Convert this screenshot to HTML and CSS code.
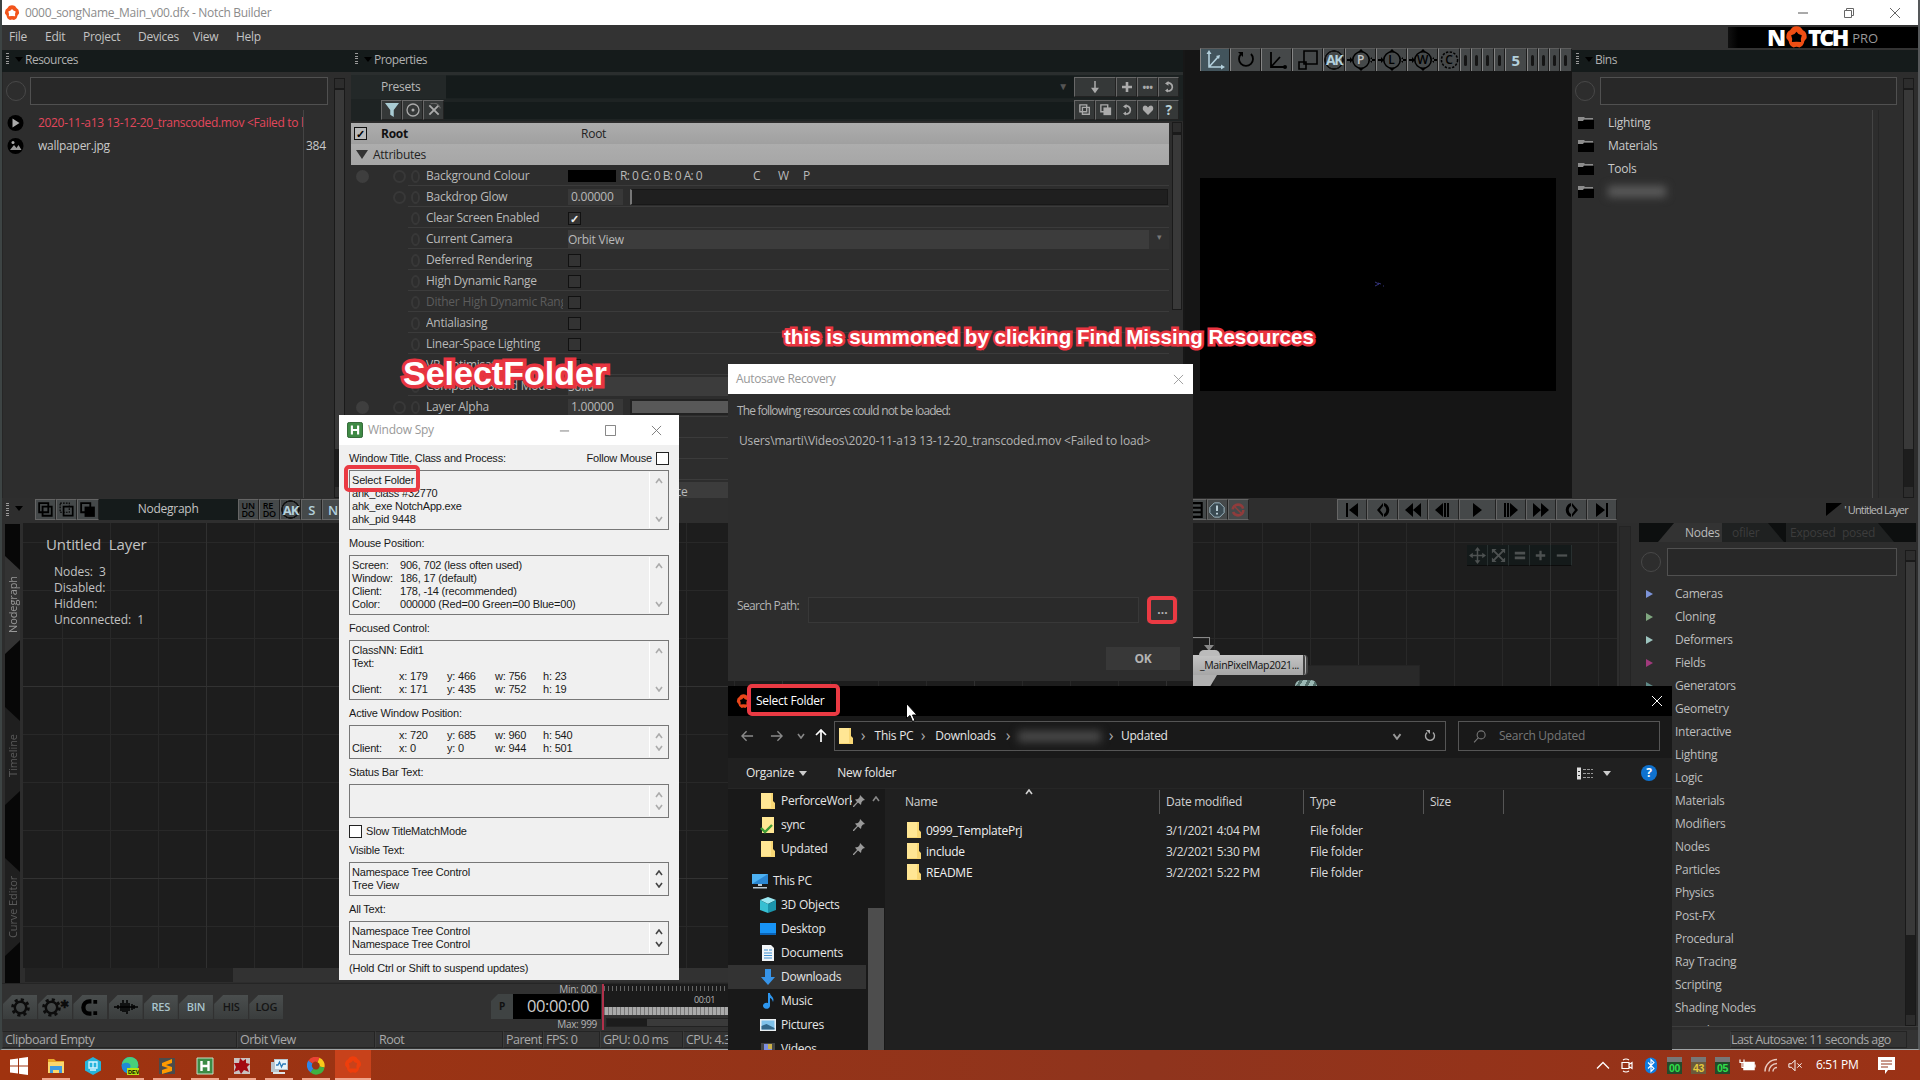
FILE: index.html
```html
<!DOCTYPE html>
<html lang="en">
<head>
<meta charset="utf-8">
<title>0000_songName_Main_v00.dfx - Notch Builder</title>
<link rel="stylesheet" href="styles.css">
</head>
<body>
<svg class="defs" aria-hidden="true">
  <symbol id="close" viewBox="0 0 12 12"><path d="M1 1l10 10M11 1L1 11" fill="none" stroke="currentColor"/></symbol>
  <symbol id="flower" viewBox="0 0 16 16"><path fill="currentColor" fill-rule="evenodd" d="M5 1q3-1.500 6 0l1.500 2q3 1.500 2.500 5.500l-1.500 2q-.5 3.500-3.500 4.500-2-1-4 0-3-1-3.500-4.500L1 8.500Q.5 4.500 3.500 3zM8 4L6.600 5.600 4.300 6.500 5 9l-.2 2.200L8 11l3.200.2L11 9l.7-2.500-2.300-.9z"/></symbol>
  <symbol id="folder" viewBox="0 0 14 17"><path fill="#f8d775" d="M0 0h12v8l2 2v6H0z"/><path fill="#ffe694" d="M0 0h10v15H0z"/></symbol>
  <symbol id="pin" viewBox="0 0 12 12"><path fill="#9a9a9a" d="M7 0l5 5-2 .6-1.500 1.700L8 10 5 7.500 1 12 0 12 0 11 4 7 2 4.500l3-.6L6.700 2z"/></symbol>
  <symbol id="bin" viewBox="0 0 16 12"><path fill="#000" d="M0 3h16v9H0z"/><path fill="#8c8c8c" d="M0 0h6l1 1h8v1.500H6L5 4H0z"/></symbol>
  <symbol id="up" viewBox="0 0 8 6"><path d="M1 5l3-4 3 4" fill="none" stroke="currentColor" stroke-width="1.600"/></symbol>
  <symbol id="down" viewBox="0 0 8 6"><path d="M1 1l3 4 3-4" fill="none" stroke="currentColor" stroke-width="1.600"/></symbol>
  <symbol id="gear" viewBox="0 0 20 20"><circle cx="10" cy="10" r="6" fill="none" stroke="currentColor" stroke-width="2.600"/><circle cx="10" cy="10" r="8.300" fill="none" stroke="currentColor" stroke-width="3" stroke-dasharray="3.260 3.260"/></symbol>
  <symbol id="diamond" viewBox="0 0 28 22"><path fill="#000" d="M0 10h28v2H0zM14 0l3 3h-6zM14 22l3-3h-6zM3 8l3 3-3 3zM25 8l-3 3 3 3z"/><circle cx="14" cy="11" r="8.200" fill="#45494a" stroke="#000" stroke-width="1.600"/></symbol>
  <symbol id="reset" viewBox="0 0 12 12"><path d="M4 2.200A4 4 0 113.500 9.500" fill="none" stroke="currentColor" stroke-width="1.700"/><path d="M5.500 0v4.800L2 2.500zM5 7.500v4L2 9.500z" fill="currentColor"/></symbol>
  <symbol id="copy" viewBox="0 0 14 14"><path d="M1 1h8v8H1zM4 4h8v8H4z" fill="none" stroke="currentColor" stroke-width="1.600"/></symbol>
  <symbol id="copyfill" viewBox="0 0 14 14"><path d="M1 1h8v8H1z" fill="none" stroke="currentColor" stroke-width="1.600"/><path d="M4 4h9v9H4z" fill="currentColor"/></symbol>
</svg>

<div class="desktop">
<main class="notch">
  <header class="titlebar">
    <svg class="app-icon"><use href="#flower"/></svg>
    <span class="app-title">0000_songName_Main_v00.dfx - Notch Builder</span>
    <div class="win-controls">
      <svg viewBox="0 0 12 12"><path d="M1 6h10" stroke="#555"/></svg>
      <svg viewBox="0 0 12 12"><path d="M1.500 3.500h7v7h-7zM3.500 3V1.500h7v7H9" fill="none" stroke="#666"/></svg>
      <svg><use href="#close"/></svg>
    </div>
  </header>
  <nav class="menubar">
    <span class="m1">File</span><span class="m2">Edit</span><span class="m3">Project</span><span class="m4">Devices</span><span class="m5">View</span><span class="m6">Help</span>
    <div class="brand"><b>N</b><svg><use href="#flower"/></svg><b>TCH</b><i>PRO</i></div>
  </nav>

  <section class="upper">
    <aside class="resources">
      <h2 class="panel-head"><i class="grip"></i><i class="tri"></i><span>Resources</span></h2>
      <div class="list-body">
        <div class="list-main">
          <div class="search"><i class="ring"></i><i class="field"></i></div>
          <div class="res-row bad"><svg viewBox="0 0 16 16"><circle cx="8" cy="8" r="8"/><path d="M5 3.500l7 4.500-7 4.500z" fill="#aaa"/></svg><span>2020-11-a13 13-12-20_transcoded.mov &lt;Failed to load&gt;</span></div>
          <div class="res-row"><svg viewBox="0 0 16 16"><circle cx="8" cy="8" r="8"/><path d="M2.500 12l4-5 2.500 3 2-3 3 5z" fill="#999"/><circle cx="5.500" cy="4.500" r="1.500" fill="#aaa"/></svg><span>wallpaper.jpg</span><em>384</em></div>
          <i class="col-line"></i>
        </div>
        <i class="vscroll"></i>
      </div>
    </aside>

    <section class="props">
      <h2 class="panel-head"><i class="grip"></i><i class="tri"></i><span>Properties</span></h2>
      <div class="presets"><span>Presets</span><i class="combo">▼</i>
        <div class="tbtns"><b class="wide"><svg viewBox="0 0 12 12"><path d="M6 0v9M3.500 7.500L6 11l2.500-3.500z" stroke="currentColor" stroke-width="1.500" fill="currentColor"/></svg></b><b><svg viewBox="0 0 12 12"><path d="M6 1v10M1 6h10" stroke="currentColor" stroke-width="2.600"/></svg></b><b>•••</b><b><svg><use href="#reset"/></svg></b></div>
      </div>
      <div class="filters">
        <div class="tbtns left"><b><svg viewBox="0 0 12 12"><path d="M0 0h12L7.500 6v6l-3-2V6z" fill="#a9cbd3"/></svg></b><b><svg viewBox="0 0 14 14"><circle cx="7" cy="7" r="6" fill="none" stroke="currentColor" stroke-width="1.300"/><circle cx="7" cy="7" r="1.500" fill="currentColor"/></svg></b><b><svg viewBox="0 0 12 12"><path d="M2 2l8 8M10 2l-8 8" stroke="currentColor" stroke-width="1.600"/><path d="M3 .7a6 6 0 018.500 4" fill="none" stroke="#666"/></svg></b></div>
        <i class="filter-field"></i>
        <div class="tbtns"><b><svg><use href="#copy"/></svg></b><b><svg><use href="#copyfill"/></svg></b><b><svg><use href="#reset"/></svg></b><b><svg viewBox="0 0 12 12"><path d="M6 11L1 6Q0 2 3 1.500 5 1.500 6 3.500 7 1.500 9 1.500 12 2 11 6z" fill="currentColor"/></svg></b><b class="q">?</b></div>
      </div>
      <div class="prop-body">
        <div class="prop-list">
          <div class="root"><i class="check dark">✓</i><b>Root</b><span>Root</span></div>
          <div class="attrs"><i class="tri big"></i><span>Attributes</span></div>
          <div class="p key dot"><label>Background Colour</label><i class="swatch"></i><span class="rgba">R: 0 G: 0 B: 0 A: 0</span><span class="cwp"><i>C</i><i>W</i><i>P</i></span></div>
          <div class="p dot"><label>Backdrop Glow</label><span class="num">0.00000</span><i class="slider"></i></div>
          <div class="p"><label>Clear Screen Enabled</label><i class="check">✓</i></div>
          <div class="p sel"><label>Current Camera</label><span class="drop">Orbit View</span><i class="arrow">▾</i></div>
          <div class="p"><label>Deferred Rendering</label><i class="check"></i></div>
          <div class="p"><label>High Dynamic Range</label><i class="check"></i></div>
          <div class="p off"><label>Dither High Dynamic Range</label><i class="check"></i></div>
          <div class="p"><label>Antialiasing</label><i class="check"></i></div>
          <div class="p"><label>Linear-Space Lighting</label><i class="check"></i></div>
          <div class="p"><label>VR Optimisation</label><i class="check"></i></div>
          <div class="p sel"><label>Composite Blend Mode</label><span class="drop">Solid</span></div>
          <div class="p key dot"><label>Layer Alpha</label><span class="num">1.00000</span><i class="slider full"></i></div>
          <div class="p"></div>
          <div class="p"></div>
          <div class="p"></div>
          <div class="p sel"><label></label><span class="drop late">Workspace</span></div>
        </div>
        <i class="vscroll short"></i>
      </div>
    </section>

    <section class="viewport">
      <div class="vtools">
        <b class="w30 lit"><svg viewBox="0 0 20 20"><path d="M4 2v15h14M4 17L13 7" fill="none" stroke="currentColor" stroke-width="1.600"/><path d="M4 0l2.500 4h-5zM20 17l-4 2.500v-5zM15 5l-1 4-3-3z" fill="currentColor"/></svg></b>
        <b class="w31"><svg viewBox="0 0 20 20"><path d="M5 4a7 7 0 1010 0" fill="none" stroke="#000" stroke-width="1.800"/><path d="M2 2h5v5z"/></svg></b>
        <b class="w31"><svg viewBox="0 0 20 20"><path d="M4 2v15h14M4 17L13 7" fill="none" stroke="#000" stroke-width="1.800"/><circle cx="18" cy="17" r="2"/></svg></b>
        <b class="w31"><svg viewBox="0 0 20 20"><path d="M6 1h13v13H6zM1 12h7v7H1z" fill="none" stroke="#000" stroke-width="1.600"/></svg></b>
        <b class="w22 ak">AK</b>
        <b class="w31 dia"><svg><use href="#diamond"/></svg><i class="pale">P</i></b>
        <b class="w31 dia"><svg><use href="#diamond"/></svg><i>L</i></b>
        <b class="w31 dia"><svg><use href="#diamond"/></svg><i>W</i></b>
        <b class="w22 dia ring-c"><svg viewBox="0 0 20 20"><circle cx="10" cy="10" r="8.500" fill="none" stroke="#000" stroke-width="1.600" stroke-dasharray="2.500 1.500"/></svg><i>C</i></b>
        <b class="w11"></b><b class="w11"></b><b class="w11"></b><b class="w11"></b><b class="w22 five">5</b><b class="w11"></b><b class="w11"></b><b class="w11"></b><b class="w11"></b>
      </div>
      <div class="screen"><svg viewBox="0 0 12 6"><path d="M1 1l4 2-4 2M4 2l3 1M9 5h1" fill="none" stroke="#34347c"/></svg></div>
    </section>

    <aside class="bins">
      <h2 class="panel-head"><i class="grip"></i><i class="tri"></i><span>Bins</span></h2>
      <div class="list-body">
        <div class="list-main">
          <div class="search"><i class="ring"></i><i class="field"></i></div>
          <div class="bin-row"><svg><use href="#bin"/></svg><span>Lighting</span></div>
          <div class="bin-row"><svg><use href="#bin"/></svg><span>Materials</span></div>
          <div class="bin-row"><svg><use href="#bin"/></svg><span>Tools</span></div>
          <div class="bin-row"><svg><use href="#bin"/></svg><i class="blurred"></i></div>
          <i class="col-line"></i><i class="col-line second"></i>
        </div>
        <i class="vscroll"></i>
      </div>
    </aside>
  </section>

  <div class="midbar">
    <i class="grip"></i><i class="tri"></i>
    <div class="mbtns first"><b><svg><use href="#copy"/></svg></b><b><svg viewBox="0 0 14 14"><path d="M1 1h8v8H1z" fill="none" stroke="#000" stroke-dasharray="1.500 1"/><path d="M4 4h8v8H4z" fill="none" stroke="#000" stroke-width="1.500"/></svg></b><b><svg><use href="#copyfill"/></svg></b></div>
    <span class="graph-name">Nodegraph</span>
    <div class="mbtns second"><b class="two">UN<br>DO</b><b class="two">RE<br>DO</b><b class="akb">AK</b><b class="blue">S</b><b class="blue">N</b></div>
    <div class="mbtns third"><b><svg viewBox="0 0 14 14"><path d="M0 1h12v12H0M0 5h12M3 9h9" fill="none" stroke="#000" stroke-width="1.800"/></svg></b><b class="info"><svg viewBox="0 0 18 18"><path d="M6 1h6l5 5v6l-5 5H6l-5-5V6z" fill="#3a4a52" stroke="#a8c4d0"/><path d="M9 4v6M9 12v2" stroke="#c8dce4" stroke-width="2"/></svg></b><b><svg viewBox="0 0 18 18"><circle cx="9" cy="9" r="6" fill="none" stroke="#8f3c3c" stroke-width="3" stroke-dasharray="16 3"/><path d="M4 4l10 10" stroke="#8f3c3c" stroke-width="1.500"/></svg></b></div>
    <div class="transport">
      <b><svg viewBox="0 0 16 16"><path d="M2 1h2v14H2zM14 1v14L5 8z"/></svg></b>
      <b><svg viewBox="0 0 16 16"><path d="M8 1L2 8l6 7v-3L5 8l3-4zM9 1c7 2 7 12 0 14v-3c3-2 3-6 0-8z"/></svg></b>
      <b><svg viewBox="0 0 16 16"><path d="M8 1v14L0 8zM16 1v14L8 8z"/></svg></b>
      <b><svg viewBox="0 0 16 16"><path d="M8 1v14L0 8zM9 1h2v14H9zM12 1h2v14h-2z"/></svg></b>
      <b class="play"><svg viewBox="0 0 16 16"><path d="M4 1l9 7-9 7z"/></svg></b>
      <b><svg viewBox="0 0 16 16"><path d="M1 1h2v14H1zM4 1h2v14H4zM7 1l8 7-8 7z"/></svg></b>
      <b><svg viewBox="0 0 16 16"><path d="M0 1l8 7-8 7zM8 1l8 7-8 7z"/></svg></b>
      <b><svg viewBox="0 0 16 16"><path d="M8 1l6 7-6 7v-3l3-4-3-4zM7 1C0 3 0 13 7 15v-3C4 10 4 6 7 4z"/></svg></b>
      <b><svg viewBox="0 0 16 16"><path d="M2 1l9 7-9 7zM12 1h2v14h-2z"/></svg></b>
    </div>
    <i class="corner"></i><span class="layer-name">' Untitled Layer</span>
  </div>

  <section class="lower">
    <div class="work">
      <div class="graph-area">
        <div class="side-tabs"><span class="on">Nodegraph</span><span>Timeline</span><span>Curve Editor</span></div>
        <div class="graph-col">
          <div class="canvas">
            <h3>Untitled&nbsp; Layer</h3>
            <p>Nodes:&nbsp; 3</p><p>Disabled:</p><p>Hidden:</p><p>Unconnected:&nbsp; 1</p>
            <div class="zoom-tools"><b><svg viewBox="0 0 18 18"><path d="M9 2v14M2 9h14" stroke="currentColor" stroke-width="1.600"/><path d="M9 0l3 4H6zM9 18l3-4H6zM0 9l4-3v6zM18 9l-4-3v6z" fill="currentColor"/></svg></b><b><svg viewBox="0 0 18 18"><path d="M3 3l12 12M15 3L3 15" stroke="currentColor" stroke-width="2"/><path d="M2 2h5L2 7zM16 2v5l-5-5zM2 16v-5l5 5zM16 16h-5l5-5z" fill="currentColor"/></svg></b><b><svg viewBox="0 0 18 18"><path d="M4 6.500h11M4 11.500h11" stroke="currentColor" stroke-width="3"/></svg></b><b><svg viewBox="0 0 18 18"><path d="M9 4v10M4 9h10" stroke="currentColor" stroke-width="2.400"/></svg></b><b><svg viewBox="0 0 18 18"><path d="M4 9h11" stroke="currentColor" stroke-width="2.400"/></svg></b></div>
            <div class="wire"></div>
            <div class="node-shade"></div>
            <i class="stem"></i>
            <div class="node"><i class="cap"></i>_MainPixelMap2021...</div>
            <i class="port"></i>
          </div>
          <div class="hscroll"></div>
        </div>
        <i class="vscroll graph-scroll"></i>
      </div>
      <div class="bottom-tools">
        <div class="chips">
          <b><svg><use href="#gear"/></svg></b>
          <b><svg><use href="#gear"/></svg><small>✱</small></b>
          <b><svg viewBox="0 0 20 20"><path d="M11 3.500H9a6.500 6.500 0 000 13h2" fill="none" stroke="#000" stroke-width="4.500"/><path d="M13 2h4v4h-4zM13 14h4v4h-4z"/></svg></b>
          <b><svg class="wave" viewBox="0 0 24 16"><path d="M0 8h24M4 6v4M7 4v8M9 1v12M11 4v9M13 1v14M15 4v8M18 5v6M20 6v4" stroke="#000" stroke-width="1.500"/></svg></b>
          <b class="tx">RES</b><b class="tx">BIN</b><b class="tx k">HIS</b><b class="tx k">LOG</b>
        </div>
        <div class="clock"><small>Min: 000</small><div class="clock-row"><b>P</b><span>00:00:00</span></div><small>Max: 999</small></div>
        <div class="timeline"><div class="ruler"><span>00:01</span></div><div class="bar"></div><div class="tscroll"></div></div>
      </div>
    </div>
    <aside class="nodes">
      <div class="node-tabs"><span class="act">Nodes</span><span class="t2">ofiler</span><span class="t3">Exposed</span><span class="t4">posed</span></div>
      <div class="list-body">
        <div class="list-main">
          <div class="search"><i class="ring"></i><i class="field"></i></div>
          <div class="n c1">Cameras</div><div class="n c2">Cloning</div><div class="n c3">Deformers</div><div class="n c4">Fields</div><div class="n c5">Generators</div><div class="n">Geometry</div><div class="n">Interactive</div><div class="n">Lighting</div><div class="n">Logic</div><div class="n">Materials</div><div class="n">Modifiers</div><div class="n">Nodes</div><div class="n">Particles</div><div class="n">Physics</div><div class="n">Post-FX</div><div class="n">Procedural</div><div class="n">Ray Tracing</div><div class="n">Scripting</div><div class="n">Shading Nodes</div><div class="n">Sound</div>
        </div>
        <i class="vscroll"></i>
      </div>
    </aside>
  </section>

  <footer class="status"><span class="s1">Clipboard Empty</span><span class="s2">Orbit View</span><span class="s3">Root</span><span class="s4">Parent</span><span class="s5">FPS: 0</span><span class="s6">GPU: 0.0 ms</span><span class="s7">CPU: 4.3 ms</span><span class="s8">Last Autosave: 11 seconds ago</span></footer>
</main>

<footer class="taskbar">
  <div class="apps">
    <b><svg viewBox="0 0 18 18"><path fill="#fff" d="M0 2.500L8 1.400V8.500H0zM9 1.200L18 0v8.500H9zM0 9.500h8v7.100L0 15.500zM9 9.500h9V18l-9-1.200z"/></svg></b>
    <b class="run"><svg viewBox="0 0 18 18"><path fill="#e9a92c" d="M1 2h6l2 2h8v3H1z"/><path fill="#fbd66d" d="M1 5h16v11H1z"/><path fill="#3f9ae0" d="M3 9h12v7h-3v-3H6v3H3z"/></svg></b>
    <b><svg viewBox="0 0 18 18"><path fill="#25b4dc" d="M9 0l8 4.500v9L9 18l-8-4.500v-9z"/><path fill="none" stroke="#d6f4ff" stroke-width="1.300" d="M5 5h8v6H5zM9 5v6M6 13h6"/></svg></b>
    <b class="run"><svg viewBox="0 0 18 18"><circle cx="9" cy="8.500" r="8.500" fill="#1f8bd6"/><path fill="#48cf7b" d="M9 0c7 0 10 7 7 11H9c2-4-2-7-8-4 1-4 4-7 8-7z"/><path fill="#b6e312" d="M6 11h12v7H6z"/><text x="7" y="16.800" font-size="5.500" font-weight="700" letter-spacing="0" font-family="Liberation Sans, sans-serif">DEV</text></svg></b>
    <b class="run"><svg viewBox="0 0 18 18"><path fill="#4b4b4b" d="M1 1h16v16H1z"/><path fill="#ff9a00" d="M4 6l10-4v4L8 8l6 2v4L4 17v-4l6-2-6-2z"/></svg></b>
    <b class="run"><svg viewBox="0 0 18 18"><path fill="#3c8c46" stroke="#c6e0c6" d="M1 1h16v16H1z"/><path fill="none" stroke="#fff" stroke-width="2.400" d="M5.500 4v10M12.500 4v10M5.500 9h7"/></svg></b>
    <b class="run"><svg viewBox="0 0 18 18"><path fill="#c9c2c0" d="M1 1h16v16H1z"/><path fill="#a30b12" d="M7 1l3 3 3-2v4l4 1-3 3 2 5-5-2-3 4-2-4-5 2 2-5-2-4 5 0z"/></svg></b>
    <b class="run"><svg viewBox="0 0 18 18"><path fill="#b9c4cc" d="M1 5h8v10H1zM4 2h14v11H4z"/><path fill="#e8f4fb" d="M5 3h12v9H5z"/><path fill="none" stroke="#2b7bb9" stroke-width="1.300" d="M6 8h2l1.500-3 2 5L13 7h3"/><path fill="#dfe5e8" d="M3 15h12v2H3z"/></svg></b>
    <b class="run"><svg viewBox="0 0 18 18"><g fill="none" stroke-width="5"><path stroke="#2f86e8" d="M5 13.500A6 6 0 013.500 5"/><path stroke="#e94234" d="M3.500 5a6 6 0 018-2"/><path stroke="#f9ca1b" d="M11.500 3a6 6 0 013.500 7"/><path stroke="#3fb143" d="M15 10a6 6 0 01-10 3.500"/></g></svg></b>
    <b class="current"><svg><use href="#flower"/></svg></b>
  </div>
  <div class="tray">
    <svg viewBox="0 0 14 14"><path d="M1 10l6-6 6 6" fill="none" stroke="#fff" stroke-width="1.300"/></svg>
    <svg viewBox="0 0 14 14"><path d="M2 4h7v6H2zM9 6l3-2v6L9 8M3 1.500q3-2 6 0M3 12.500q3 2 6 0" fill="none" stroke="#fff" stroke-width="1.200"/></svg>
    <svg viewBox="0 0 14 16"><rect x="1" width="12" height="16" rx="6" fill="#0d7be0"/><path d="M4 5l6 6-3 3V2l3 3-6 6" fill="none" stroke="#fff" stroke-width="1.100"/></svg>
    <span class="meter">00</span><span class="meter amber">43</span><span class="meter">05</span>
    <svg viewBox="0 0 17 12"><path d="M5 3h10v7H5z" fill="#fff" stroke="#fff" stroke-width="1.500"/><path d="M1 0v3h4V0M3 3v5h2M16 5v3" fill="none" stroke="#fff" stroke-width="1.200"/></svg>
    <svg viewBox="0 0 14 14"><path d="M1 13A12 12 0 0113 1M5 13a8 8 0 018-8M9 13a4 4 0 014-4" fill="none" stroke="#e8c8be" stroke-width="1.500"/></svg>
    <svg viewBox="0 0 16 14"><path d="M1 5h3l4-4v12L4 9H1zM10.500 4.500l5 5M15.500 4.500l-5 5" fill="none" stroke="#fff" stroke-width="1.100"/></svg>
    <span class="time">6:51 PM</span>
    <svg class="notes" viewBox="0 0 17 17"><path fill="#fff" d="M0 0h17v13h-7l-3 4v-4H0z"/><path d="M3 4h11M3 7h11M3 10h7" stroke="#93341b"/></svg>
  </div>
</footer>
</div>

<section class="spy">
  <header><svg class="h-icon" viewBox="0 0 18 18"><rect x=".5" y=".5" width="17" height="17" rx="2" fill="#3f8a45" stroke="#245c2a"/><path fill="none" stroke="#fff" stroke-width="2.400" d="M5.500 4v10M12.500 4v10M5.500 9h7"/></svg><span>Window Spy</span>
    <div class="spy-ctl"><svg viewBox="0 0 12 12"><path d="M1 6.500h10" stroke="#777"/></svg><svg viewBox="0 0 12 12"><path d="M.5.500h11v11H.500z" fill="none" stroke="#777"/></svg><svg><use href="#close"/></svg></div></header>
  <div class="spy-body">
    <div class="lab"><span>Window Title, Class and Process:</span><span class="follow">Follow Mouse<i class="cb"></i></span></div>
    <div class="box tall"><div>Select Folder<br>ahk_class #32770<br>ahk_exe NotchApp.exe<br>ahk_pid 9448</div><i class="sp"><svg><use href="#up"/></svg><svg><use href="#down"/></svg></i></div>
    <div class="lab">Mouse Position:</div>
    <div class="box tall"><div class="kv"><span>Screen:</span><span>906, 702 (less often used)</span><span>Window:</span><span>186, 17 (default)</span><span>Client:</span><span>178, -14 (recommended)</span><span>Color:</span><span>000000 (Red=00 Green=00 Blue=00)</span></div><i class="sp"><svg><use href="#up"/></svg><svg><use href="#down"/></svg></i></div>
    <div class="lab">Focused Control:</div>
    <div class="box tall"><div>ClassNN: Edit1<br>Text:<div class="xy"><span></span><span>x: 179</span><span>y: 466</span><span>w: 756</span><span>h: 23</span><span>Client:</span><span>x: 171</span><span>y: 435</span><span>w: 752</span><span>h: 19</span></div></div><i class="sp"><svg><use href="#up"/></svg><svg><use href="#down"/></svg></i></div>
    <div class="lab">Active Window Position:</div>
    <div class="box"><div class="xy"><span></span><span>x: 720</span><span>y: 685</span><span>w: 960</span><span>h: 540</span><span>Client:</span><span>x: 0</span><span>y: 0</span><span>w: 944</span><span>h: 501</span></div><i class="sp"><svg><use href="#up"/></svg><svg><use href="#down"/></svg></i></div>
    <div class="lab">Status Bar Text:</div>
    <div class="box"><div></div><i class="sp"><svg><use href="#up"/></svg><svg><use href="#down"/></svg></i></div>
    <div class="lab slow"><i class="cb"></i>Slow TitleMatchMode</div>
    <div class="lab low">Visible Text:</div>
    <div class="box"><div>Namespace Tree Control<br>Tree View</div><i class="sp live"><svg><use href="#up"/></svg><svg><use href="#down"/></svg></i></div>
    <div class="lab">All Text:</div>
    <div class="box"><div>Namespace Tree Control<br>Namespace Tree Control</div><i class="sp live"><svg><use href="#up"/></svg><svg><use href="#down"/></svg></i></div>
    <div class="lab">(Hold Ctrl or Shift to suspend updates)</div>
  </div>
</section>

<section class="recovery">
  <header><span>Autosave Recovery</span><svg><use href="#close"/></svg></header>
  <div class="rec-body">
    <p>The following resources could not be loaded:</p>
    <p class="path">Users\marti\Videos\2020-11-a13 13-12-20_transcoded.mov &lt;Failed to load&gt;</p>
    <div class="rec-search"><span>Search Path:</span><i></i><b>...</b></div>
    <div class="rec-foot"><b>OK</b></div>
  </div>
</section>

<section class="picker">
  <header><svg class="p-icon"><use href="#flower"/></svg><span>Select Folder</span><svg class="x"><use href="#close"/></svg></header>
  <div class="nav">
    <div class="arrows"><svg viewBox="0 0 14 12"><path d="M13 6H1M6 1L1 6l5 5" fill="none" stroke="#8a8a8a" stroke-width="1.500"/></svg><svg viewBox="0 0 14 12"><path d="M1 6h12M8 1l5 5-5 5" fill="none" stroke="#8a8a8a" stroke-width="1.500"/></svg><svg class="sm"><use href="#down"/></svg><svg class="upar" viewBox="0 0 12 14"><path d="M6 13V1M1 6l5-5 5 5" fill="none" stroke="#fff" stroke-width="1.700"/></svg></div>
    <div class="address"><svg class="f"><use href="#folder"/></svg><i class="b1">›</i><span class="c-pc">This PC</span><i>›</i><span class="c-dl">Downloads</span><i>›</i><span class="c-blur"></span><i>›</i><span class="c-up">Updated</span><div class="addr-end"><svg class="dn"><use href="#down"/></svg><svg class="rf" viewBox="0 0 12 12"><path d="M3 2.500a4.500 4.500 0 106 0" fill="none" stroke="#aaa" stroke-width="1.400"/><path d="M2 0h4v4z" fill="#aaa"/></svg></div></div>
    <div class="find"><svg viewBox="0 0 12 12"><circle cx="7.500" cy="4.500" r="3.700" fill="none" stroke="#777"/><path d="M5 7L1 11.500" stroke="#777"/></svg><span>Search Updated</span></div>
  </div>
  <div class="commands"><span>Organize</span><i class="car"></i><span class="nf">New folder</span><svg class="view" viewBox="0 0 16 12"><path d="M0 0h4v12H0z" fill="#ddd"/><path d="M6 2h10M6 6h10M6 10h10" stroke="#999" stroke-dasharray="3 1"/><path d="M1 4h2M1 8h2" stroke="#333"/></svg><i class="car"></i><b class="help">?</b></div>
  <div class="pick-main">
    <div class="tree">
      <div class="items">
        <div class="it pinr"><svg class="f"><use href="#folder"/></svg><span>PerforceWorkspace</span><svg class="pin"><use href="#pin"/></svg></div>
        <div class="it pinr"><svg class="f" viewBox="0 0 14 17"><path fill="#ffe694" d="M1 0h12v16H1z"/><path d="M0 11l4 4 7-7" stroke="#3f9c35" stroke-width="2.400" fill="none"/></svg><span>sync</span><svg class="pin"><use href="#pin"/></svg></div>
        <div class="it pinr"><svg class="f"><use href="#folder"/></svg><span>Updated</span><svg class="pin"><use href="#pin"/></svg></div>
        <div class="it pc"><svg viewBox="0 0 16 16"><path fill="#4db1f2" d="M0 1h16v10H0z"/><path fill="#2b87d3" d="M16 1v10H0z"/><path fill="#b8c8d2" d="M6 11h4v2H6zM1 14h14v1.500H1z"/></svg><span>This PC</span></div>
        <div class="it"><svg viewBox="0 0 16 16"><path fill="#9be8f2" d="M8 0l8 3-8 4-8-4z"/><path fill="#37bfd2" d="M0 3l8 4v9l-8-3z"/><path fill="#1b94ab" d="M16 3L8 7v9l8-3z"/></svg><span>3D Objects</span></div>
        <div class="it"><svg viewBox="0 0 16 16"><path fill="#1793f5" d="M0 2h16v12H0z"/><path fill="#0a62b5" d="M0 12h16v2H0z"/></svg><span>Desktop</span></div>
        <div class="it"><svg viewBox="0 0 16 16"><path fill="#f2f5f7" d="M2 0h9l3 3v13H2z"/><path d="M4 5h4M9 5h3M4 8h8M4 10.500h8M4 13h8" stroke="#3f8fd0"/></svg><span>Documents</span></div>
        <div class="it chosen"><svg viewBox="0 0 16 16"><path fill="#3794e8" d="M5 0h6v8h4l-7 8-7-8h4z"/></svg><span>Downloads</span></div>
        <div class="it"><svg viewBox="0 0 16 16"><path d="M8 0h2c0 3 5 4 3 9-1-3-2-4-3-4v8a3.500 3 0 11-2-3z" fill="#2d96ee"/></svg><span>Music</span></div>
        <div class="it"><svg viewBox="0 0 16 16"><path fill="#e9eef1" d="M0 2h16v12H0z"/><path fill="#7fc2ea" d="M1.500 3.500h13v9h-13z"/><path fill="#33688a" d="M1.500 12.500V9l5-2 8 4v1.500z"/></svg><span>Pictures</span></div>
        <div class="it"><svg viewBox="0 0 16 16"><path fill="#444" d="M1 2h14v12H1z"/><path fill="#7d8ee0" d="M4 3h8v10H4z"/><path fill="#c9b04a" d="M8 3h4v5H8z"/></svg><span>Videos</span></div>
      </div>
      <div class="tree-scroll"><svg><use href="#up"/></svg><i></i></div>
    </div>
    <div class="files">
      <div class="frow fhead"><span>Name<svg><use href="#up"/></svg></span><span>Date modified</span><span>Type</span><span>Size</span></div>
      <div class="frow"><span><svg class="f"><use href="#folder"/></svg>0999_TemplatePrj</span><span>3/1/2021 4:04 PM</span><span>File folder</span></div>
      <div class="frow"><span><svg class="f"><use href="#folder"/></svg>include</span><span>3/2/2021 5:30 PM</span><span>File folder</span></div>
      <div class="frow"><span><svg class="f"><use href="#folder"/></svg>README</span><span>3/2/2021 5:22 PM</span><span>File folder</span></div>
    </div>
  </div>
</section>

<div class="note n-select">SelectFolder</div>
<div class="note n-summon">this is summoned by clicking Find Missing Resources</div>
<i class="mark k-spy"></i><i class="mark k-dots"></i><i class="mark k-title"></i>
<svg class="cursor" viewBox="0 0 12 19"><path d="M.5.500v15l3.500-3 2.500 6 2.500-1-2.500-5.500H11z" fill="#fff" stroke="#000"/></svg>
</body>
</html>
```
FILE: styles.css
```css
* { box-sizing: border-box; }
html, body { margin: 0; height: 100%; overflow: hidden; background: #2d2d2d; }
body { font: 12px/16px "Open Sans", "Noto Sans", sans-serif; color: #b4b4b4; letter-spacing: -.25px; white-space: nowrap; }
i, em { font-style: normal; }
svg { display: block; flex: none; }
.defs { position: absolute; width: 0; height: 0; }

.desktop { width: 1920px; height: 1080px; display: flex; flex-direction: column; }
.notch { height: 1050px; display: flex; flex-direction: column; background: #2d2d2d; border-left: 2px solid #3d4444; border-right: 2px solid #55585a; border-bottom: 1px solid #9fa4a6; }

/* title and menu */
.titlebar { height: 25px; flex: none; background: #fff; display: flex; align-items: center; padding-left: 2px; color: #8b8b8b; }
.app-icon { width: 16px; height: 16px; color: #f2541b; margin-right: 5px; }
.app-title { font-size: 12px; letter-spacing: -.3px; }
.win-controls { margin-left: auto; display: flex; gap: 34px; padding-right: 17px; color: #666; }
.win-controls svg { width: 12px; height: 12px; }
.menubar { height: 25px; flex: none; background: #333; display: flex; align-items: center; padding-left: 7px; color: #c3c3c3; }
.menubar > span { margin-top: -2px; }
.m1 { width: 36px; } .m2 { width: 38px; } .m3 { width: 55px; } .m4 { width: 55px; } .m5 { width: 43px; }
.brand { margin-left: auto; width: 190px; height: 21px; background: linear-gradient(90deg, #111, #000 10px); display: flex; align-items: center; padding-left: 39px; color: #fff; }
.brand b { font: 800 23px/21px "Open Sans", sans-serif; letter-spacing: -2.300px; }
.brand svg { width: 23px; height: 23px; color: #f04e14; margin: 0 0 0 1px; }
.brand i { font-size: 13px; color: #999; margin-left: 5px; letter-spacing: 0; }

/* shared panel parts */
.panel-head { margin: 0; height: 22px; flex: none; background: #151b1b; display: flex; align-items: center; font: inherit; letter-spacing: -.5px; color: #b0b0b0; padding: 0 0 3px 4px; }
.grip { width: 3px; height: 13px; flex: none; background: repeating-linear-gradient(#999 0 1px, transparent 1px 2.500px); }
.tri { width: 0; height: 0; flex: none; border: 4px solid transparent; border-top: 5px solid #000; border-bottom: 0; margin: 0 2px 0 6px; }
.list-body { flex: 1; min-height: 0; display: flex; overflow: hidden; }
.list-main { flex: 1; position: relative; overflow: hidden; }
.search { display: flex; align-items: center; height: 33px; padding: 5px 0 0 3px; margin-bottom: 6px; }
.ring { width: 20px; height: 20px; border: 1px solid #484848; border-radius: 50%; margin-right: 4px; }
.field { flex: 1; height: 28px; border: 1px solid #505050; background: #282828; }
.vscroll { width: 11px; flex: none; border: 1px solid #1a1a1a; background: linear-gradient(#2d2d2d 9px, #1a1a1a 9px 11px, #393939 11px calc(100% - 48px), #1d1d1d calc(100% - 48px) calc(100% - 10px), #2d2d2d 0); }
.col-line { position: absolute; left: 300px; top: 38px; bottom: 0; border-left: 1px solid #444; }

.upper { height: 448px; flex: none; display: grid; grid-template-columns: 349px 834px 387px 1fr; background: #2d2d2d; }
.upper > * { min-width: 0; min-height: 0; display: flex; flex-direction: column; overflow: hidden; }
.resources .list-body, .bins .list-body { padding-right: 4px; }
.resources .search { padding-right: 6px; }
.resources .list-main { border-left: 1px solid #262626; }
.resources .vscroll { margin: 6px 2px 0 0; }
.res-row { height: 23px; display: flex; align-items: center; padding-left: 4px; color: #c9c9c9; }
.res-row svg { width: 17px; height: 16px; margin-right: 14px; }
.res-row span { width: 265px; overflow: hidden; }
.res-row.bad { color: #e2475c; letter-spacing: -.32px; }
.res-row em { margin-left: 3px; }

/* properties */
.props { border-right: 2px solid #171717; }
.presets { height: 27px; flex: none; display: flex; align-items: center; background: #1b2121; border-top: 3px solid #2a2e2e; }
.presets > span { width: 95px; height: 24px; padding: 4px 0 0 30px; background: #232828; color: #b8b8b8; }
.combo { flex: 1; height: 22px; background: #151b1b; color: #555; text-align: right; padding-right: 6px; font-size: 10px; line-height: 20px; }
.tbtns { display: flex; padding-right: 4px; }
.tbtns b { width: 21px; height: 20px; border: 1px solid #686868; border-right-color: #222; border-bottom-color: #222; background: #353838; color: #aaa; display: grid; place-items: center; font-size: 10px; line-height: 16px; letter-spacing: -.5px; }
.tbtns b.wide { width: 42px; }
.tbtns svg { width: 12px; height: 12px; }
.tbtns .q { font-size: 14px; color: #b6ced4; }
.tbtns.left { padding: 0 0 0 30px; }
.tbtns.left svg { width: 14px; height: 14px; }
.filters { height: 23px; flex: none; display: flex; align-items: center; background: #1e2323; border-bottom: 1px solid #2a2a2a; }
.filter-field { flex: 1; height: 17px; background: #151b1b; }
.prop-body { flex: 1; min-height: 0; display: flex; padding-right: 1px; }
.prop-list { flex: 1; min-width: 0; margin: 1px 3px 0 0; }
.vscroll.short { width: 10px; height: 188px; background: linear-gradient(#2d2d2d 9px, #1a1a1a 9px 12px, #393939 12px); }
.root, .attrs { height: 21px; display: flex; align-items: center; color: #222; background: linear-gradient(#adadad, #a0a0a0); }
.attrs { background: linear-gradient(#adadad, #a6a6a6); }
.root b { margin-left: 14px; width: 200px; color: #111; }
.check { width: 13px; height: 13px; flex: none; border: 1px solid #111; background: #333; color: #eee; font-size: 11px; line-height: 11px; text-align: center; font-weight: 700; }
.check.dark { margin-left: 3px; background: #b9b9b9; color: #000; }
.tri.big { border-width: 6px; border-top: 9px solid #333; border-bottom: 0; margin: 0 5px 0 5px; }
.p { height: 21px; padding-top: 2px; margin-left: 57px; display: flex; align-items: center; border-bottom: 1px solid #3b3b3b; color: #b9b9b9; position: relative; }
.p::before { content: ""; flex: none; width: 5px; height: 9px; border: 2px solid #383838; border-radius: 50%; margin: 0 7px 0 3px; }
.p.dot::after { content: ""; position: absolute; left: -15px; width: 9px; height: 9px; border: 2px solid #383838; border-radius: 50%; }
.p.key::after { box-shadow: -37px 0 0 0 #3e3e3e; }
.p label { flex: none; width: 141px; overflow: hidden; margin-right: 1px; margin-left: -1px; }
.p.off label { width: 137px; margin-right: 5px; }
.p.off { color: #5c5c5c; }
.swatch { width: 48px; height: 12px; background: #000; margin-right: 4px; }
.rgba { width: 133px; letter-spacing: -.6px; }
.cwp { display: flex; } .cwp i { width: 25px; }
.num { width: 55px; height: 16px; background: #383838; padding-left: 3px; margin-right: 7px; }
.slider { flex: 1; height: 16px; background: #1f1f1f; border: 1px solid #181818; border-left: 2px solid #777; margin-right: 1px; }
.slider.full { background: #585858; border: 2px solid #222; }
.drop { flex: 1; height: 19px; line-height: 19px; background: #3c3c3c; }
.drop.late { padding-left: 60px; }
.arrow { width: 20px; height: 19px; background: #303030; text-align: center; color: #777; font-size: 9px; line-height: 14px; }

/* viewport */
.viewport.viewport { background: #151515; overflow: visible; }
.vtools { display: flex; height: 24px; margin: -2px 0 0 15px; flex: none; }
.vtools b { height: 23px; background: #454849; border-left: 1px solid #858585; border-top: 1px solid #5c5c5c; border-right: 1px solid #1c1c1c; display: grid; place-items: center; color: #b3d0dc; line-height: 22px; }
.vtools svg { width: 20px; height: 20px; }
.w30 { width: 30px; } .w31 { width: 31px; } .w22 { width: 22px; } .w11 { width: 11.200px; }
.vtools .lit { background: #42545c; }
.vtools .w11::after { content: ""; width: 3px; height: 11px; background: #151515; border-radius: 2px; }
.vtools .ak { font-size: 14px; letter-spacing: -1.500px; background: radial-gradient(circle, transparent 8px, #111 8.500px 9.500px, transparent 10px) #454849; }
.vtools .five { font-size: 15px; }
.vtools .dia svg { width: 28px; height: 22px; grid-area: 1/1; }
.vtools .ring-c svg { width: 19px; }
.dia i { grid-area: 1/1; color: #000; font-size: 12px; font-weight: 600; z-index: 1; } .dia .pale { color: #c7c7c7; }
.screen { width: 356px; height: 213px; margin: 106px 0 0 15px; background: #000; padding: 103px 0 0 174px; }
.screen svg { width: 12px; height: 6px; }

.bins .search { padding-right: 4px; }
.bins .ring { margin-right: 5px; }
.bins .vscroll { margin: 6px 0 0 2px; }
.bin-row { height: 23px; display: flex; align-items: center; padding-left: 6px; color: #c9c9c9; }
.bin-row svg { width: 16px; height: 12px; margin-right: 14px; }
.blurred { width: 58px; height: 11px; background: #5c5c5c; filter: blur(4px); }
.col-line.second { left: 306px; border-color: #262626; }

/* divider toolbar */
.midbar { height: 25px; flex: none; display: flex; align-items: flex-start; padding: 1px 0 0 4px; background: #2e2e2e; }
.midbar > * { flex: none; }
.midbar .grip { margin-top: 4px; }
.midbar .tri { margin-top: 7px; }
.mbtns { display: flex; }
.mbtns b { width: 21.200px; height: 21px; background: #45494a; border: 1px solid #656565; border-right-color: #222; display: grid; place-items: center; color: #000; }
.mbtns svg { width: 16px; height: 16px; }
.first { margin-left: 10px; }
.graph-name { width: 139px; height: 21px; line-height: 20px; background: #151b1b; text-align: center; color: #c3c3c3; }
.mbtns .two { font-size: 9px; line-height: 8px; letter-spacing: -.3px; font-weight: 600; }
.mbtns .akb { color: #b3d0dc; font-size: 13px; letter-spacing: -1px; background: radial-gradient(circle, transparent 7.500px, #111 8px 9px, transparent 9.500px) #454849; }
.mbtns .blue { color: #b3d0dc; font-size: 13px; font-weight: 600; }
.third { margin-left: 842px; }
.transport { display: flex; margin-left: 88px; }
.transport b { width: 30.400px; height: 21px; background: #454849; border: 1px solid #666; border-right-color: #222; display: grid; place-items: center; }
.transport .play { width: 37px; }
.transport svg { width: 16px; height: 16px; }
.corner { margin: 4px 0 0 209px; border-top: 13px solid #000; border-right: 16px solid transparent; }
.layer-name { margin: 3px 0 0 2px; font-size: 11px; letter-spacing: -.85px; color: #bbb; }

/* lower work area */
.lower { height: 507px; flex: none; display: grid; grid-template-columns: 1635px 1fr; background: #2d2d2d; }
.work { display: flex; flex-direction: column; min-width: 0; overflow: hidden; }
.graph-area { height: 460px; flex: none; display: flex; }
.side-tabs { width: 15px; margin: 1px 3px 0 3px; background: #070707; display: flex; flex-direction: column; }
.side-tabs span { flex: none; writing-mode: vertical-rl; transform: rotate(180deg); width: 15px; height: 98px; margin-top: 53px; display: grid; place-items: center; color: #5a5a5a; background: #1f1f1f; clip-path: polygon(0 14px, 100% 0, 100% 100%, 0 calc(100% - 14px)); font-size: 11px; line-height: 14px; letter-spacing: -.1px; }
.side-tabs .on { color: #999; background: #333; margin-top: 32px; }
.graph-col { flex: 1; display: flex; flex-direction: column; min-width: 0; }
.canvas { flex: 1; position: relative; padding: 11px 0 0 23px; color: #c3c3c3; background:
  linear-gradient(#323232, #323232) 0 163px/100% 1px no-repeat,
  linear-gradient(#323232, #323232) 0 355px/100% 1px no-repeat,
  repeating-linear-gradient(90deg, transparent 0 191px, #303030 191px 192px) -8px 0,
  repeating-linear-gradient(90deg, transparent 0 47px, #282828 47px 48px) -8px 0,
  repeating-linear-gradient(transparent 0 47px, #282828 47px 48px) 0 -28px, #1d1d1d; }
.canvas h3 { margin: 0 0 10px; font: 15px/20px "Open Sans", sans-serif; letter-spacing: -.1px; }
.canvas p { margin: 0 0 0 8px; line-height: 16px; letter-spacing: -.05px; }
.hscroll { height: 14px; margin: 0 0 1px 2px; background: linear-gradient(90deg, #222 208px, #323232 208px); }
.graph-scroll { width: 12px; margin: 3px 6px 14px 2px; background: #292929; border-color: #242424; }
.zoom-tools { position: absolute; left: 1444px; top: 22px; display: flex; background: #141a1a; }
.zoom-tools b { width: 21px; height: 21px; border-right: 1px solid #283030; border-bottom: 1px solid #0c0c0c; color: #4d5151; display: grid; place-items: center; }
.zoom-tools svg { width: 17px; height: 17px; }
.wire { position: absolute; left: 1168px; top: 114px; width: 19px; height: 10px; border: solid #888; border-width: 1px 1px 0 0; }
.stem { position: absolute; left: 1181px; top: 122px; border: 5px solid transparent; border-top: 6px solid #888; border-bottom: 0; }
.node { position: absolute; left: 1170px; top: 132px; width: 115px; height: 20px; padding-left: 7px; background: linear-gradient(#c4c4c4, #a6a6a6); color: #111; font-size: 10.500px; line-height: 20px; letter-spacing: -.35px; border-right: 5px double #444; border-radius: 0 4px 4px 0; }
.node::after { content: ""; position: absolute; left: 0; top: 20px; width: 24px; height: 12px; background: #b0b0b0; clip-path: polygon(0 0, 100% 0, 70% 100%, 0 100%); }
.cap { position: absolute; left: 6px; top: -5px; width: 21px; height: 6px; background: #bbb; border-radius: 5px 5px 0 0; }
.node-shade { position: absolute; left: 1190px; top: 142px; width: 207px; height: 24px; background: #292929; border: 1px solid #242424; }
.port { position: absolute; left: 1272px; top: 157px; width: 22px; height: 12px; border-radius: 6px; background: repeating-linear-gradient(120deg, #9ab8b4 0 4px, #55706c 4px 7px); }

/* bottom tools */
.bottom-tools { flex: 1; display: flex; background: #313131; border-top: 1px solid #252525; }
.chips { display: flex; gap: 1.200px; padding: 11px 0 0 1px; width: 488px; flex: none; }
.chips b { width: 34px; height: 24px; background: linear-gradient(#4a4e4e, #3a3d3d); clip-path: polygon(9px 0, 100% 0, 100% 100%, 0 100%, 0 9px); display: flex; align-items: center; justify-content: center; color: #0c0c0c; font-size: 13px; }
.chips svg { width: 19px; height: 19px; }
.chips .wave { width: 24px; height: 16px; }
.chips small { margin: -6px 0 0 -1px; font-size: 11px; }
.chips .tx { font-size: 11px; font-weight: 600; color: #a9c4cc; } .chips .k { color: #151515; }
.clock { width: 112px; flex: none; text-align: right; padding-right: 1px; }
.clock small { display: block; font-size: 10px; line-height: 10px; height: 10px; padding-right: 4px; letter-spacing: -.3px; }
.clock-row { display: flex; height: 25px; margin: 0 0 0 1px; }
.clock-row b { width: 22px; background: #3f4343; color: #111; text-align: center; font-size: 10px; line-height: 25px; clip-path: polygon(7px 0, 100% 0, 100% 100%, 0 100%, 0 7px); }
.clock-row span { flex: 1; background: #000; color: #ccc; font-size: 16.500px; line-height: 24px; text-align: center; letter-spacing: -.4px; padding-left: 2px; }
.timeline { flex: 1; border-left: 2px solid #b0304a; }
.ruler { height: 23px; background: repeating-linear-gradient(90deg, #666 0 1px, transparent 1px 4px) 0 2px/100% 5px no-repeat, #1b1b1b; padding: 10px 0 0 90px; font-size: 9px; line-height: 12px; letter-spacing: -.4px; }
.bar { height: 8px; background: repeating-linear-gradient(90deg, #777 0 1px, #aaa 1px 4px); }
.tscroll { height: 9px; margin: 3px 0 0 2px; background: linear-gradient(90deg, #1c1c1c 40px, #3a3a3a 40px); border: 1px solid #222; }

/* node library */
.nodes { display: flex; flex-direction: column; min-height: 0; height: 504px; padding-right: 2px; border-bottom: 1px solid #3d3d3d; }
.node-tabs { height: 19px; flex: none; margin: 0 0 1px 2px; background: #0d0f0f; display: flex; color: #3c3c3c; line-height: 19px; }
.node-tabs span { height: 19px; flex: none; background: #1f2121; padding-left: 10px; clip-path: polygon(0 0, calc(100% - 16px) 0, 100% 100%, 0 100%); }
.node-tabs .act { width: 84px; margin-left: 19px; padding-left: 27px; background: #333; color: #bbb; clip-path: polygon(16px 0, calc(100% - 16px) 0, 100% 100%, 0 100%); }
.node-tabs .t2 { width: 62px; margin-left: -20px; }
.node-tabs .t3 { width: 56px; margin-left: 2px; padding-left: 4px; clip-path: none; }
.node-tabs .t4 { width: 52px; padding-left: 0; }
.nodes .ring { margin-right: 6px; }
.nodes .search { padding: 4px 8px 0 4px; height: 34px; }
.nodes .vscroll { margin-top: 7px; background: linear-gradient(#2d2d2d 9px, #1a1a1a 9px 11px, #393939 11px calc(100% - 90px), #1d1d1d calc(100% - 90px) calc(100% - 10px), #2d2d2d 0); }
.n { height: 23px; line-height: 21px; padding-left: 38px; color: #bdbdbd; position: relative; }
.n[class*="c"]::before { content: ""; position: absolute; left: 9px; top: 7px; border: 4px solid transparent; border-left: 7px solid var(--c); border-right: 0; }
.c1 { --c: #7c93d8; } .c2 { --c: #7fa67f; } .c3 { --c: #9dc4bf; } .c4 { --c: #a03a7c; } .c5 { --c: #5f8a88; }

/* status */
.status { flex: 1; display: flex; align-items: center; background: #333; color: #a9a9a9; font-size: 12.5px; letter-spacing: -.5px; }
.status span { flex: none; height: 17px; line-height: 15px; padding-left: 2px; border: 1px solid #242424; border-left-color: #3c3c3c; }
.status .s1 { width: 235px; } .status .s2 { width: 138px; } .status .s3 { width: 128px; padding-left: 3px; }
.status .s4 { width: 40px; } .status .s5 { width: 57px; } .status .s6 { width: 83px; } .status .s7 { width: 80px; } .status .s8 { width: 177px; margin-left: auto; margin-right: 11px; padding-left: 0; letter-spacing: -.6px; }

/* taskbar */
.taskbar { height: 30px; display: flex; justify-content: space-between; background: linear-gradient(90deg, #a0330f, #8f341d 60%, #9b3216); }
.apps { display: flex; }
.apps b { width: 37.200px; height: 30px; display: grid; place-items: center; padding-top: 1px; }
.apps svg { width: 18px; height: 18px; }
.apps .run { background: linear-gradient(#efa58c, #efa58c) center bottom/28px 2px no-repeat; }
.apps .current { width: 36px; margin-left: 0; background: #c8421b; border-bottom: 2px solid #efa58c; color: #ee3e0c; }
.tray { display: flex; align-items: center; padding-right: 25px; }
.tray svg { width: 14px; height: 15px; margin-right: 10px; }
.tray svg:nth-of-type(3) { height: 17px; margin-right: 9px; }
.tray svg:nth-of-type(4) { width: 17px; margin-right: 8px; }
.tray .meter { width: 15px; margin-right: 9px; height: 17px; background: #234a2a; border-top: 5px solid #777; color: #2fe04a; font: 700 10.500px/12px "Liberation Sans", sans-serif; text-align: center; }
.tray .amber { color: #e5c83a; background: #6b5a3c; }
.tray .time { color: #fff; width: 66px; padding-left: 4px; letter-spacing: -.35px; }
.tray .notes { width: 17px; height: 17px; margin: 0; }

/* Window Spy */
.spy { position: absolute; left: 339px; top: 415px; width: 340px; height: 565px; background: #f0f0f0; color: #1a1a1a; font: 11px/13px "Liberation Sans", Arial, sans-serif; letter-spacing: -.2px; }
.spy header { height: 30px; background: #fff; display: flex; align-items: center; padding-left: 8px; font: 12px/16px "Open Sans", sans-serif; letter-spacing: -.25px; color: #999; }
.h-icon { width: 16px; height: 16px; margin-right: 5px; }
.spy-ctl { margin-left: auto; display: flex; gap: 35px; padding-right: 17px; color: #777; }
.spy-ctl svg, .recovery header svg { width: 11px; height: 11px; }
.spy-body { padding: 0 10px; }
.lab { height: 25px; display: flex; align-items: center; padding-top: 2px; }
.lab.slow { padding-top: 1px; }
.lab.low { height: 19px; padding: 0 0 4px; }
.follow { margin-left: auto; display: flex; align-items: center; }
.cb { width: 13px; height: 13px; border: 1px solid #222; background: #fff; margin-left: 4px; }
.slow .cb { margin: 0 4px 0 0; }
.box { height: 34px; border: 1px solid #777; padding: 3px 0 0 2px; display: flex; justify-content: space-between; }
.box.tall { height: 60px; }
.kv { display: grid; grid-template-columns: 48px auto; align-content: start; }
.xy { display: grid; grid-template-columns: 47px 48px 48px 48px auto; align-content: start; }
.sp { width: 19px; margin: -2px 0 1px; border-left: 1px solid #fff; display: flex; flex-direction: column; align-items: center; justify-content: space-between; padding: 6px 0; color: #ababab; }
.sp.live { color: #444; }
.sp svg { width: 8px; height: 6px; }

/* Autosave Recovery */
.recovery { position: absolute; left: 728px; top: 364px; width: 465px; height: 317px; background: #2d2d2d; color: #b4b4b4; }
.recovery header { height: 30px; background: #fff; display: flex; align-items: center; justify-content: space-between; padding: 0 9px 0 8px; color: #999; letter-spacing: -.35px; }
.rec-body { padding: 9px 13px 0 9px; display: flex; flex-direction: column; }
.rec-body p { margin: 0 0 14px; letter-spacing: -.9px; word-spacing: .4px; }
.rec-body .path { margin: 0 0 147px 2px; letter-spacing: -.14px; word-spacing: 0; }
.rec-search { display: flex; align-items: center; height: 28px; }
.rec-search span { width: 71px; padding-bottom: 8px; letter-spacing: -.65px; }
.rec-search i { width: 331px; height: 26px; border: 1px solid #383838; background: #2a2a2a; }
.rec-search b { width: 31px; height: 26px; margin-left: 8px; background: #343434; text-align: center; line-height: 26px; letter-spacing: 0; }
.rec-foot { display: flex; justify-content: flex-end; padding-top: 23px; }
.rec-foot b { width: 74px; height: 23px; background: #383838; line-height: 23px; text-align: center; }

/* Select Folder */
.picker { position: absolute; left: 728px; top: 686px; width: 944px; height: 364px; overflow: hidden; background: #202020; color: #e6e6e6; display: flex; flex-direction: column; }
.picker header { height: 30px; flex: none; background: #000; display: flex; align-items: center; padding: 0 9px 0 8px; color: #fff; }
.p-icon { width: 15px; height: 15px; color: #e8461a; margin-right: 5px; }
.picker .x { width: 12px; height: 12px; margin-left: auto; }
.nav { height: 42px; flex: none; background: #191919; display: flex; align-items: flex-start; padding: 5px 10px 0 13px; }
.arrows { display: flex; align-items: center; height: 30px; width: 93px; flex: none; color: #888; }
.arrows svg { width: 13px; height: 12px; margin-right: 16px; }
.arrows .sm { width: 8px; height: 6px; margin: 0 10px 0 -2px; } .arrows .upar { width: 12px; height: 14px; margin: 0; }
.address { width: 612px; flex: none; height: 30px; border: 1px solid #555; display: flex; align-items: center; padding-left: 4px; }
.f { width: 14px; height: 17px; }
.address > i { width: 16px; text-align: center; color: #aaa; font-size: 16px; line-height: 14px; padding-bottom: 3px; }
.address .b1 { width: 20px; }
.c-pc { width: 42px; } .c-dl { width: 69px; }
.address span { text-align: center; }
.c-up { margin-left: 2px; }
.c-blur { width: 83px; margin: 0 2px; height: 11px; background: #4a4a4a; filter: blur(4px); }
.addr-end { margin-left: auto; display: flex; align-items: center; gap: 22px; padding-right: 9px; color: #999; }
.dn { width: 10px; height: 7px; } .rf { width: 12px; height: 12px; }
.find { width: 202px; flex: none; height: 30px; margin-left: 12px; border: 1px solid #555; display: flex; align-items: center; padding-left: 14px; color: #777; }
.find svg { width: 13px; height: 13px; margin-right: 13px; }
.commands { height: 30px; flex: none; display: flex; align-items: center; padding: 0 15px 0 18px; }
.car { border: 4px solid transparent; border-top: 5px solid #ccc; border-bottom: 0; margin-left: 5px; }
.nf { margin-left: 30px; }
.view { width: 16px; height: 13px; margin-left: auto; margin-right: 5px; }
.help { width: 16px; height: 16px; margin-left: 30px; border-radius: 50%; background: #0f72cf; color: #fff; text-align: center; line-height: 16px; }
.pick-main { flex: 1; min-height: 0; display: flex; border-top: 1px solid #262626; }
.tree { width: 157px; display: flex; background: #191919; flex: none; }
.items { width: 138px; flex: none; }
.it { height: 24px; display: flex; align-items: center; padding-left: 32px; }
.it svg { width: 16px; height: 16px; margin-right: 5px; }
.it .f { width: 16px; height: 17px; }
.pinr span { width: 71px; overflow: hidden; }
.it .pin { width: 12px; height: 12px; margin: 0 0 0 1px; }
.it.pc { margin-top: 8px; padding-left: 24px; }
.chosen { background: #333; }
.tree-scroll { width: 19px; padding-left: 1px; display: flex; flex-direction: column; align-items: center; justify-content: space-between; color: #888; padding-top: 7px; }
.tree-scroll svg { width: 8px; height: 6px; }
.tree-scroll i { width: 16px; height: 142px; background: #4d4d4d; }
.files { flex: 1; padding-top: 1px; }
.frow { height: 21px; display: grid; grid-template-columns: 275px 144px 120px 80px; }
.frow span { display: flex; align-items: center; padding-left: 6px; color: #ddd; }
.frow span:first-child { padding-left: 22px; color: #f0f0f0; }
.frow .f { margin-right: 5px; }
.fhead { height: 24px; margin-bottom: 6px; }
.frow.fhead span { border-right: 1px solid #555; color: #d2d2d2; position: relative; }
.frow.fhead span:first-child { padding-left: 20px; }
.fhead svg { position: absolute; left: 140px; top: -1px; width: 8px; height: 6px; }

/* annotations */
.note { position: absolute; color: #fff; font: 700 34px/40px "Liberation Sans", Arial, sans-serif; letter-spacing: 0; -webkit-text-stroke: 7px #e83440; paint-order: stroke fill; stroke-linejoin: round; }
.n-select { left: 403px; top: 353px; }
.n-summon { left: 784px; top: 325px; font-size: 20.600px; line-height: 24px; -webkit-text-stroke-width: 5px; }
.mark { position: absolute; border: 4px solid #ea3a43; border-radius: 5px; }
.k-spy { left: 344px; top: 465px; width: 76px; height: 27px; }
.k-dots { left: 1147px; top: 596px; width: 30px; height: 28px; }
.k-title { left: 747px; top: 684px; width: 93px; height: 32px; }
.cursor { position: absolute; left: 906px; top: 703px; width: 12px; height: 19px; }
```
